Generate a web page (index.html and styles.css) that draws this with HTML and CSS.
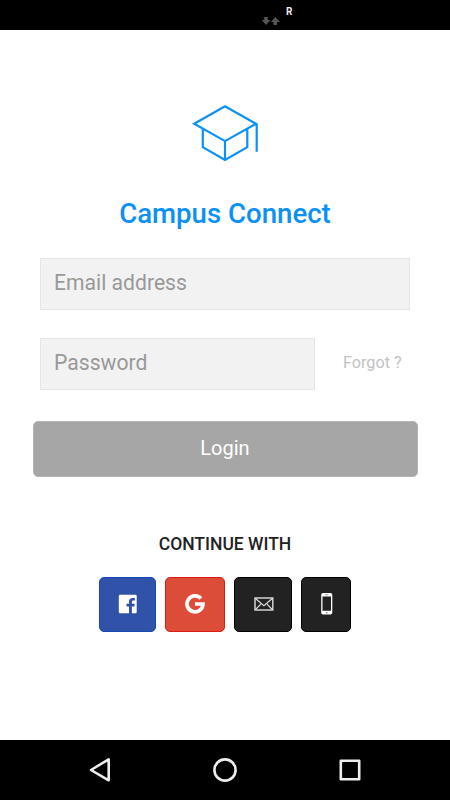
FILE: index.html
```html
<!DOCTYPE html>
<html lang="en">
<head>
<meta charset="utf-8">
<title>Campus Connect</title>
<link rel="stylesheet" href="styles.css">
</head>
<body>
<div class="screen">
  <header class="status-bar">
    <svg class="traffic" width="18" height="8" viewBox="0 0 18 8" fill="#555"><path d="M2.200 0h3.500v3H8.500L4 8-.3 3h2.500zM11.500 8H15V5h3L13.300 0 8.900 5h2.600z"/></svg>
    <span class="roaming">R</span>
  </header>
  <main class="login">
    <svg class="logo" width="90" height="80" viewBox="0 0 90 80" fill="none" stroke="#0b90f6" stroke-width="2.200"><path d="M14.200 33.700 45 16.200 76 33.800 45 51.100zM22.800 38.500v18.700L45 70l22.300-12.800V38.500M45 51v19M76.700 33.500v28.300"/></svg>
    <h1 class="title">Campus Connect</h1>
    <form class="form">
      <input class="field" type="email" placeholder="Email address" aria-label="Email address">
      <div class="password-row">
        <input class="field field-password" type="password" placeholder="Password" aria-label="Password">
        <a class="forgot">Forgot ?</a>
      </div>
      <button class="submit" type="button">Login</button>
    </form>
    <h2 class="subtitle">CONTINUE WITH</h2>
    <div class="providers">
      <button class="provider facebook" type="button" aria-label="Facebook">
        <svg width="20" height="20" viewBox="0 0 20 20"><path fill="#fff" d="M2 .8h15.500q1.200 0 1.200 1.200v16q0 1.200-1.200 1.200h-3.600v-6.700h2.500l.4-2.800h-2.900V8q0-1.400 1.400-1.400h1.600V4.100h-2.200q-3.700 0-3.700 3.700v1.900H8.500v2.800H11v6.700H2Q.8 19.200.8 18V2Q.8.800 2 .8z"/></svg>
      </button>
      <button class="provider google" type="button" aria-label="Google">
        <svg width="20" height="20" viewBox="0 0 20 20" fill="none" stroke="#fff" stroke-width="3.700"><path d="M15.900 4.500A8 8 0 1 0 18 10H10"/></svg>
      </button>
      <button class="provider mail" type="button" aria-label="Email">
        <svg width="20" height="14" viewBox="0 0 20 14" fill="none" stroke="#ddd" stroke-width="1.200"><rect x="1" y="1" width="17.800" height="12" stroke-width="1.400"/><path d="m1.500 1.500 8.400 7.200 8.400-7.200M1.500 12.500l5.300-5.300M18.300 12.500 13 7.200"/></svg>
      </button>
      <button class="provider phone" type="button" aria-label="Phone">
        <svg width="12" height="22" viewBox="0 0 12 22"><path fill="#fff" fill-rule="evenodd" d="M2 0h7.500q1.800 0 1.800 1.800v18q0 1.800-1.800 1.800H2Q.2 21.600.2 19.800v-18Q.2 0 2 0zM1.500 3.500v14.300h8.500V3.500z"/><path stroke="#888" stroke-width=".8" d="M4.200 1.800h3"/><circle cx="5.800" cy="19.700" r=".8" fill="#777"/></svg>
      </button>
    </div>
  </main>
  <nav class="nav-bar">
    <svg width="26" height="26" viewBox="0 0 26 26"><path d="M21.700 2.300v21L4 13z"/></svg>
    <svg width="26" height="26" viewBox="0 0 26 26"><circle cx="13" cy="13" r="10.600"/></svg>
    <svg width="26" height="26" viewBox="0 0 26 26"><rect x="3.800" y="3.800" width="18.400" height="18.400"/></svg>
  </nav>
</div>
</body>
</html>
```
FILE: styles.css
```css
* { box-sizing: border-box; }

body {
  margin: 0;
  background: #fff;
  font-family: Roboto, sans-serif;
}

.screen {
  width: 450px;
  height: 800px;
  display: flex;
  flex-direction: column;
  overflow: hidden;
}

.status-bar {
  height: 30px;
  flex: none;
  display: flex;
  padding-left: 262px;
  gap: 6px;
  background: #000;
}

.traffic { margin-top: 17px; }

.roaming {
  margin-top: 6px;
  color: #eee;
  font-size: 10px;
  line-height: 12px;
  font-weight: 700;
}

.login {
  flex: 1;
  display: flex;
  flex-direction: column;
  align-items: center;
  padding-top: 60px;
}

.logo { flex: none; }

.title {
  margin: 26px 0 0;
  height: 37px;
  color: #0b90f6;
  font-size: 27.6px;
  line-height: 36px;
  font-weight: 500;
  white-space: nowrap;
}

.form {
  width: 385px;
  margin-top: 25px;
  display: flex;
  flex-direction: column;
}

.field {
  width: 370px;
  height: 52px;
  margin: 0 7.5px;
  padding: 0 13px 3px;
  border: 1px solid #e5e5e5;
  border-radius: 0;
  background: #f2f2f2;
  font: 400 21.150px Roboto, sans-serif;
}

.field::placeholder {
  color: #999;
  opacity: 1;
}

.password-row {
  display: flex;
  margin-top: 28px;
}

.field-password { width: 275px; }

.forgot {
  margin-left: 20.500px;
  color: #c2c2c2;
  font-size: 16.200px;
  line-height: 49px;
}

.submit {
  width: 385px;
  height: 56px;
  margin-top: 31px;
  padding: 0 0 2px;
  border: 1px solid #b4b4b4;
  border-radius: 5px;
  background: #a6a6a6;
  color: #fff;
  font: 400 20px Roboto, sans-serif;
}

.subtitle {
  margin: 55px 0 0;
  color: #222;
  font-size: 17.500px;
  line-height: 24px;
  font-weight: 500;
  white-space: nowrap;
}

.providers {
  display: flex;
  gap: 9px;
  margin-top: 21px;
}

.provider {
  height: 55px;
  display: flex;
  align-items: center;
  justify-content: center;
  padding: 0 0 2px 1px;
  border: 1px solid;
  border-radius: 5px;
}

.facebook {
  width: 57px;
  background: #3152a9;
  border-color: #1749b5;
}

.google {
  width: 60px;
  padding-left: 0;
  background: #dd4b39;
  border-color: #dc1c13;
}

.mail {
  width: 58.500px;
  background: #222;
  border-color: #000;
}

.phone {
  width: 50px;
  background: #222;
  border-color: #000;
}

.nav-bar {
  height: 60px;
  flex: none;
  display: flex;
  align-items: center;
  justify-content: space-between;
  padding: 0 87px;
  background: #000;
  fill: none;
  stroke: #eee;
  stroke-width: 2.600;
  stroke-linejoin: round;
}
```
